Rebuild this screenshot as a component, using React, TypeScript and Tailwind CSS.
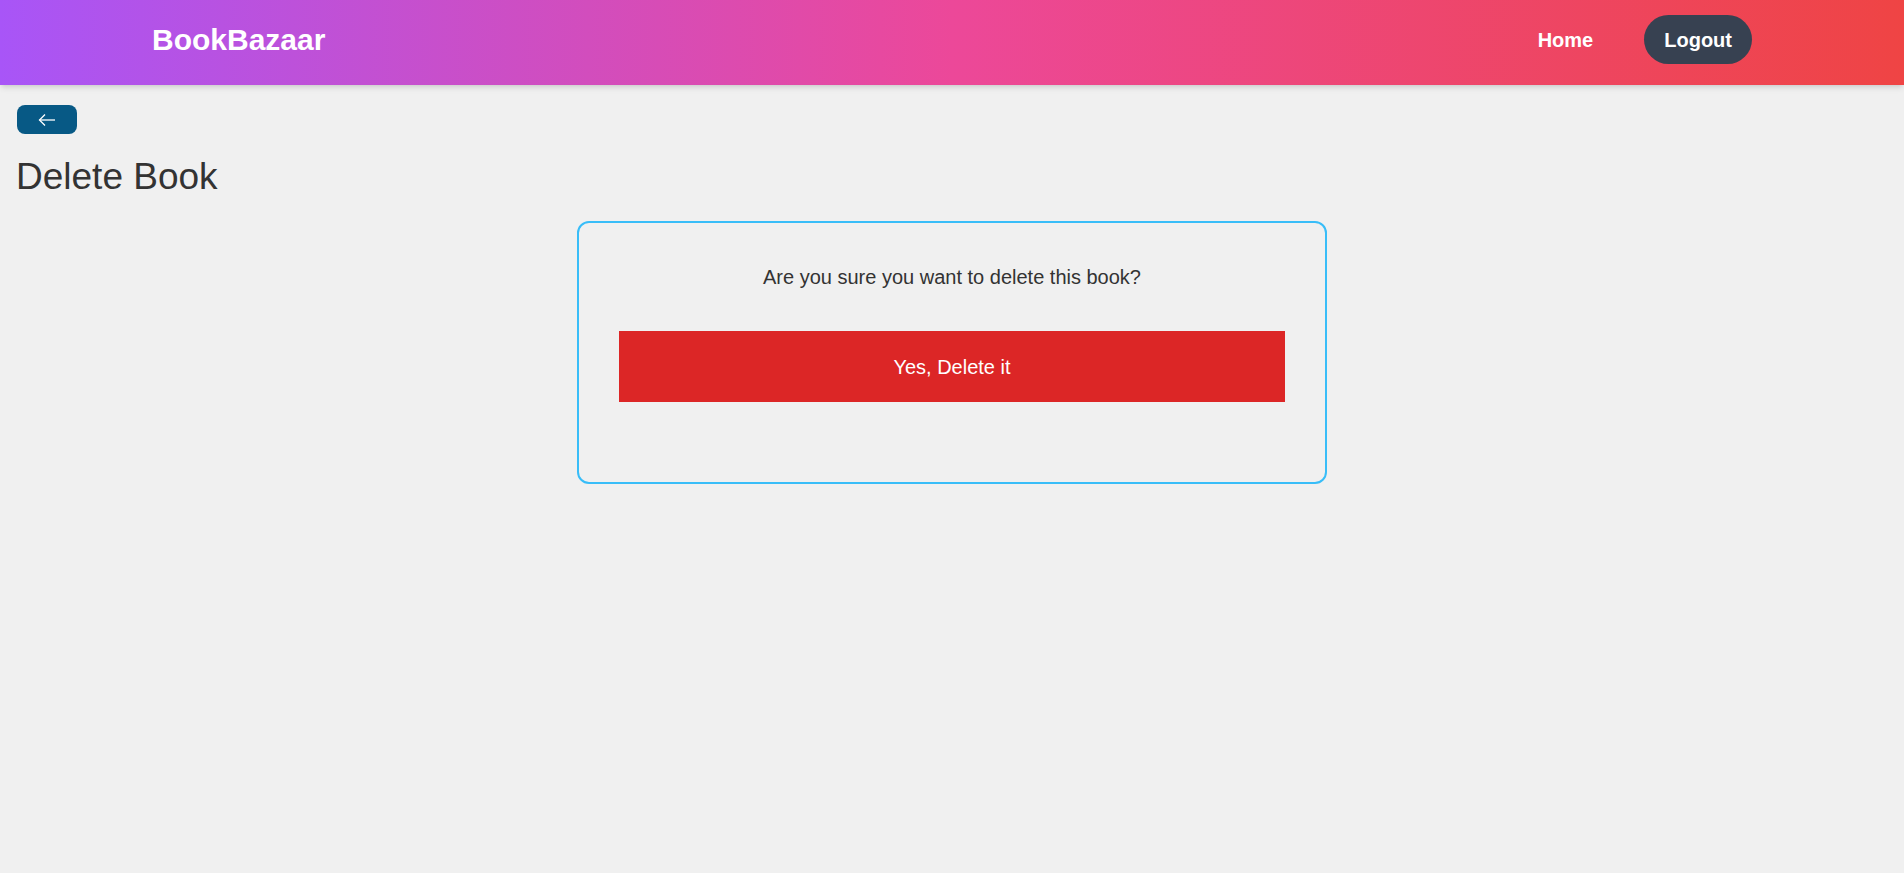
export default function App() {
  return (
    <div className="min-h-[873px] bg-[#f0f0f0]" style={{ fontFamily: '"Liberation Sans", Arial, sans-serif' }}>
      <header className="h-[85px] bg-[linear-gradient(to_right,#a855f7,#ec4899,#ef4444)] shadow-[0_4px_6px_-1px_rgba(0,0,0,0.1),0_2px_4px_-2px_rgba(0,0,0,0.1)]">
        <div className="mx-auto flex h-full max-w-[1600px] items-center justify-between pb-[6px]">
          <span className="text-[30px] font-bold text-white">BookBazaar</span>
          <nav className="flex items-center gap-[51px]">
            <span className="text-xl font-bold text-white">Home</span>
            <span className="flex h-[49px] items-center rounded-full bg-[#374151] px-5 text-xl font-bold text-white">Logout</span>
          </nav>
        </div>
      </header>
      <main className="px-4">
        <button className="mt-5 ml-px flex h-[29px] w-[60px] items-center justify-center rounded-lg bg-[#075985]">
          <svg width="18" height="14" viewBox="0 0 18 14" fill="none" stroke="white" strokeWidth="1.3">
            <path d="M17 7H1.5" />
            <path d="M7 1.5L1.5 7L7 12.5" />
          </svg>
        </button>
        <h1 className="mt-[23px] text-[37px] leading-[40px] text-[#333]">Delete Book</h1>
        <div className="mx-auto mt-[24px] w-[750px] rounded-xl border-2 border-[#38bdf8] p-10">
          <p className="text-center text-xl leading-7 text-[#333]">Are you sure you want to delete this book?</p>
          <button className="mt-10 mb-10 flex h-[71px] w-full items-center justify-center bg-[#dc2626] text-xl text-white">Yes, Delete it</button>
        </div>
      </main>
    </div>
  );
}
